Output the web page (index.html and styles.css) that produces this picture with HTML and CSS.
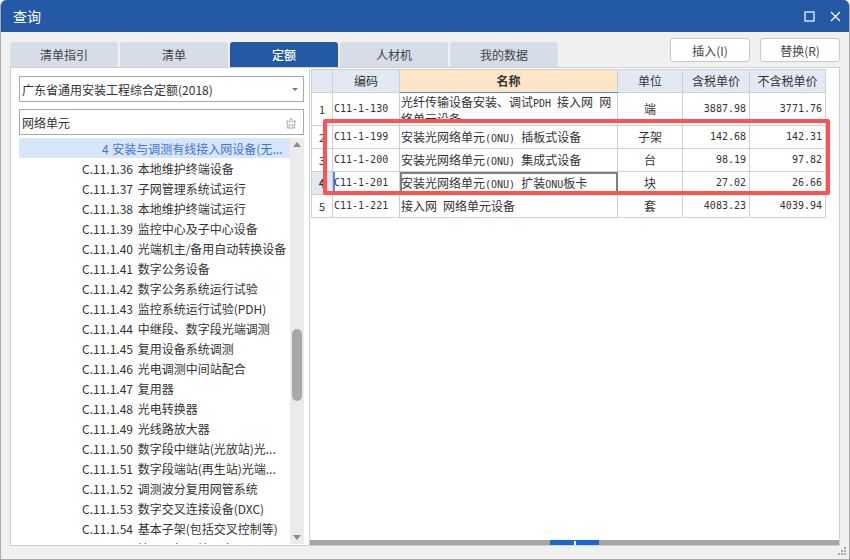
FILE: index.html
```html
<!DOCTYPE html>
<html lang="zh-CN">
<head>
<meta charset="utf-8">
<title>查询</title>
<link rel="stylesheet" href="styles.css">
</head>
<body>
<div class="window">
  <header class="titlebar">
    <span class="title">查询</span>
    <span class="win-btns">
      <svg class="win-icon" viewBox="0 0 11 11" width="11" height="11"><rect x="1" y="1" width="9" height="9" fill="none" stroke="#fff" stroke-width="1.2"/></svg>
      <svg class="win-icon" viewBox="0 0 11 11" width="11" height="11"><path d="M1 1L10 10M10 1L1 10" fill="none" stroke="#fff" stroke-width="1.2"/></svg>
    </span>
  </header>
  <div class="content">
    <div class="toolbar">
      <nav class="tabs">
        <span class="tab">清单指引</span>
        <span class="tab">清单</span>
        <span class="tab active">定额</span>
        <span class="tab">人材机</span>
        <span class="tab">我的数据</span>
      </nav>
      <div class="actions">
        <button class="btn">插入(I)</button>
        <button class="btn">替换(R)</button>
      </div>
    </div>
    <div class="panels">
      <aside class="left">
        <div class="field select">
          <span>广东省通用安装工程综合定额(2018)</span>
          <span class="caret"></span>
        </div>
        <div class="field search">
          <span>网络单元</span>
          <svg class="clean" viewBox="0 0 13 13" width="12" height="12"><path d="M5 2.5h3M6.5 1v2M1 4.5h11M2.5 4.5v7.5h8V4.5M4.5 12V8.5h4V12" fill="none" stroke="#a8a8a8" stroke-width="1"/></svg>
        </div>
        <div class="tree-wrap">
          <ul class="tree">
            <li class="node top">4 安装与调测有线接入网设备(无...</li>
            <li class="node">C.11.1.36 本地维护终端设备</li>
            <li class="node">C.11.1.37 子网管理系统试运行</li>
            <li class="node">C.11.1.38 本地维护终端试运行</li>
            <li class="node">C.11.1.39 监控中心及子中心设备</li>
            <li class="node">C.11.1.40 光端机主/备用自动转换设备</li>
            <li class="node">C.11.1.41 数字公务设备</li>
            <li class="node">C.11.1.42 数字公务系统运行试验</li>
            <li class="node">C.11.1.43 监控系统运行试验(PDH)</li>
            <li class="node">C.11.1.44 中继段、数字段光端调测</li>
            <li class="node">C.11.1.45 复用设备系统调测</li>
            <li class="node">C.11.1.46 光电调测中间站配合</li>
            <li class="node">C.11.1.47 复用器</li>
            <li class="node">C.11.1.48 光电转换器</li>
            <li class="node">C.11.1.49 光线路放大器</li>
            <li class="node">C.11.1.50 数字段中继站(光放站)光...</li>
            <li class="node">C.11.1.51 数字段端站(再生站)光端...</li>
            <li class="node">C.11.1.52 调测波分复用网管系统</li>
            <li class="node">C.11.1.53 数字交叉连接设备(DXC)</li>
            <li class="node">C.11.1.54 基本子架(包括交叉控制等)</li>
            <li class="node">C.11.1.55 接口子架、接口盘</li>
          </ul>
          <div class="vscroll">
            <span class="arrow up"></span>
            <span class="thumb"></span>
            <span class="arrow down"></span>
          </div>
        </div>
      </aside>
      <section class="right">
        <div class="grid-area">
          <table class="grid">
            <colgroup>
              <col class="c-idx"><col class="c-code"><col class="c-name"><col class="c-unit"><col class="c-price"><col class="c-price2">
            </colgroup>
            <thead>
              <tr>
                <th></th><th>编码</th><th class="sorted">名称</th><th>单位</th><th>含税单价</th><th>不含税单价</th>
              </tr>
            </thead>
            <tbody>
              <tr class="tall">
                <td class="idx">1</td><td class="code">C11-1-130</td>
                <td class="name"><div class="clip">光纤传输设备安装、调试<span class="m">PDH </span>接入网<span class="m"> </span>网络单元设备</div></td>
                <td class="unit">端</td><td class="num">3887.98</td><td class="num">3771.76</td>
              </tr>
              <tr>
                <td class="idx">2</td><td class="code">C11-1-199</td>
                <td class="name">安装光网络单元<span class="m">(ONU) </span>插板式设备</td>
                <td class="unit">子架</td><td class="num">142.68</td><td class="num">142.31</td>
              </tr>
              <tr>
                <td class="idx">3</td><td class="code">C11-1-200</td>
                <td class="name">安装光网络单元<span class="m">(ONU) </span>集成式设备</td>
                <td class="unit">台</td><td class="num">98.19</td><td class="num">97.82</td>
              </tr>
              <tr class="current">
                <td class="idx">4</td><td class="code">C11-1-201</td>
                <td class="name">安装光网络单元<span class="m">(ONU) </span>扩装<span class="m">ONU</span>板卡</td>
                <td class="unit">块</td><td class="num">27.02</td><td class="num">26.66</td>
              </tr>
              <tr>
                <td class="idx">5</td><td class="code">C11-1-221</td>
                <td class="name">接入网<span class="m"> </span>网络单元设备</td>
                <td class="unit">套</td><td class="num">4083.23</td><td class="num">4039.94</td>
              </tr>
            </tbody>
          </table>
          <div class="highlight"></div>
        </div>
        <div class="hscroll"><span class="hthumb"><i></i></span></div>
      </section>
    </div>
    <div class="grip">
      <svg viewBox="0 0 8 8" width="8" height="8"><path d="M6 0h2v2H6zM3 3h2v2H3zM6 3h2v2H6zM0 6h2v2H0zM3 6h2v2H3zM6 6h2v2H6z" fill="#a8a8a8"/></svg>
    </div>
  </div>
</div>
</body>
</html>
```
FILE: styles.css
```css
* { box-sizing: border-box; }
html, body { margin: 0; padding: 0; }
body {
  width: 850px;
  height: 560px;
  overflow: hidden;
  background: #fff;
  font-family: "Noto Sans CJK SC", "Open Sans", sans-serif;
  font-size: 12px;
  color: #333;
}
.window {
  width: 850px;
  height: 560px;
  display: flex;
  flex-direction: column;
  border: 1px solid #a9a9a9;
  border-top: 0;
  border-radius: 6px 6px 0 0;
  background: #f0f0f0;
  overflow: hidden;
}
.titlebar {
  height: 32px;
  flex: none;
  display: flex;
  align-items: center;
  justify-content: space-between;
  padding: 0 8px 0 12px;
  background: #245aa5;
  color: #fff;
}
.title { font-size: 14px; }
.win-btns { display: flex; gap: 15px; align-items: center; }
.win-icon { display: block; }
.content {
  flex: 1;
  display: flex;
  flex-direction: column;
  padding: 0 9px 0 9px;
  position: relative;
}
.toolbar {
  height: 35px;
  flex: none;
  display: flex;
  justify-content: space-between;
}
.tabs { display: flex; gap: 2px; padding-top: 10px; }
.tab {
  width: 108px;
  height: 25px;
  display: flex;
  align-items: center;
  justify-content: center;
  background: #d6dce8;
  border-radius: 3px 3px 0 0;
  color: #444;
}
.tab.active { background: #245aa5; color: #fff; font-weight: 500; }
.actions { display: flex; gap: 10px; padding-top: 6px; }
.btn {
  width: 80px;
  height: 24px;
  padding: 0;
  background: #fff;
  border: 1px solid #c8c8c8;
  border-radius: 3px;
  font: inherit;
  color: #444;
}
.panels {
  height: 479px;
  flex: none;
  display: flex;
}
.left {
  width: 300px;
  flex: none;
  background: #fff;
  border: 1px solid #d0d0d0;
  padding: 8px 5px 0 8px;
  display: flex;
  flex-direction: column;
}
.field {
  height: 26px;
  flex: none;
  border: 1px solid #a9a9a9;
  display: flex;
  align-items: center;
  justify-content: space-between;
  padding: 1px 5px 0 2px;
  font-size: 12px;
  color: #333;
}
.search { margin-top: 7px; padding-right: 6px; }
.caret {
  width: 0;
  height: 0;
  border-left: 3px solid transparent;
  border-right: 3px solid transparent;
  border-top: 3px solid #777;
}
.clean { display: block; }
.tree-wrap {
  margin-top: 3px;
  height: 406px;
  display: flex;
  overflow: hidden;
}
.tree {
  list-style: none;
  margin: 0;
  padding: 0;
  width: 271px;
  flex: none;
  height: 406px;
  overflow: hidden;
}
.node {
  height: 20px;
  line-height: 20px;
  padding-top: 1px;
  padding-left: 63px;
  white-space: nowrap;
  color: #333;
  font-size: 12px;
  word-spacing: 2px;
}
.node.top {
  background: #d8e6fc;
  color: #3f75d8;
  padding-left: 83px;
  word-spacing: 1px;
}
.vscroll {
  width: 14px;
  flex: none;
  background: #ebebeb;
  display: flex;
  flex-direction: column;
  align-items: center;
  justify-content: space-between;
  position: relative;
  padding: 4px 0;
}
.arrow { width: 0; height: 0; border-left: 4px solid transparent; border-right: 4px solid transparent; }
.arrow.up { border-bottom: 5px solid #8a8a8a; }
.arrow.down { border-top: 5px solid #8a8a8a; }
.thumb {
  position: absolute;
  left: 2px;
  top: 191px;
  width: 10px;
  height: 72px;
  background: #a8a8a8;
  border-radius: 5px;
}
.right {
  flex: 1;
  background: #fff;
  border: 1px solid #d0d0d0;
  border-left: 0;
  display: flex;
  flex-direction: column;
  min-width: 0;
}
.grid-area {
  flex: 1;
  position: relative;
  padding-left: 1px;
}
.grid {
  border-collapse: collapse;
  table-layout: fixed;
  width: 514px;
  margin-top: 1px;
  color: #333;
}
.c-idx { width: 21px; }
.c-code { width: 67px; }
.c-name { width: 218px; }
.c-unit { width: 65px; }
.c-price { width: 67px; }
.c-price2 { width: 76px; }
.grid th, .grid td {
  border: 1px solid #cfcfcf;
  height: 23px;
  padding: 0 0 2px;
  overflow: hidden;
  white-space: nowrap;
}
.grid th {
  background: #e3e9f2;
  font-weight: 400;
  font-size: 12px;
  padding-bottom: 1px;
}
.grid th.sorted {
  background: #fde6c8;
  font-weight: 700;
  border-bottom: 1px solid #3f8fea;
}
.grid tr.tall td { height: 33px; }
.idx { text-align: center; font-size: 11px; background: #fff; }
.grid td.idx { padding-bottom: 0; }
.grid td.code {
  font-family: "DejaVu Sans Mono", monospace;
  font-size: 10px;
  padding-left: 1px;
}
.grid td.name { padding-left: 1px; font-size: 12px; }
.clip {
  height: 29px;
  white-space: normal;
  line-height: 15px;
  overflow: hidden;
}
.m { font-family: "DejaVu Sans Mono", monospace; font-size: 10px; white-space: pre-wrap; }
.unit { text-align: center; }
.grid td.num {
  text-align: right;
  font-family: "DejaVu Sans Mono", monospace;
  font-size: 10px;
  padding-right: 3px;
}
.current .idx { background: #e3e9f2; font-weight: 700; }
.current .code { box-shadow: inset 2px 0 0 #4a90e8; }
.current .name { outline: 2px solid #7f7f7f; outline-offset: -2px; }
.highlight {
  position: absolute;
  left: 13px;
  top: 51px;
  width: 507px;
  height: 76px;
  border: 4px solid #ff5252;
  border-radius: 2px;
  pointer-events: none;
}
.hscroll {
  height: 5px;
  flex: none;
  background: #a6a6a8;
  position: relative;
}
.hthumb {
  position: absolute;
  left: 240px;
  top: 0;
  width: 49px;
  height: 5px;
  background: #1766d6;
}
.hthumb i {
  position: absolute;
  left: 24px;
  top: 1px;
  width: 2px;
  height: 4px;
  background: #fff;
}
.grip {
  position: absolute;
  right: 3px;
  bottom: 4px;
  line-height: 0;
}
```
